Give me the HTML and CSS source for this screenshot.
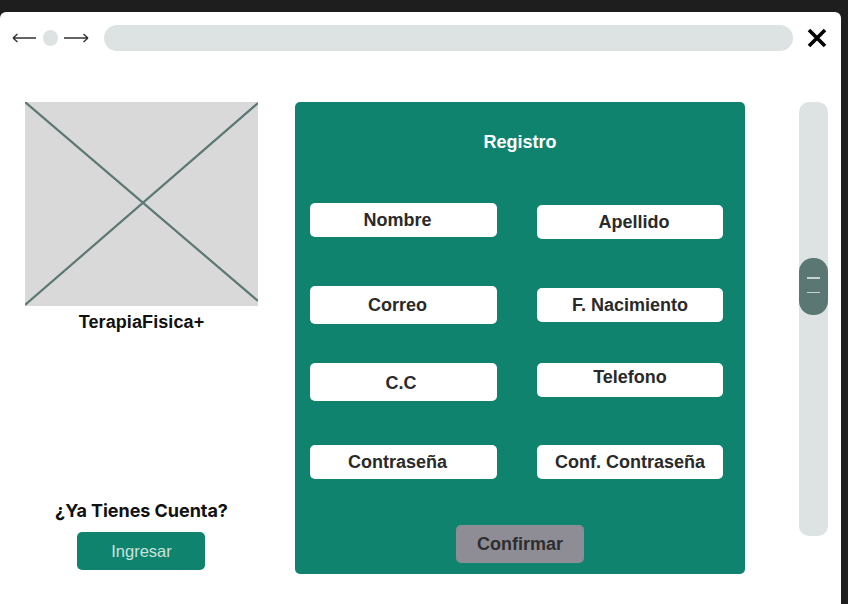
FILE: index.html
```html
<!DOCTYPE html>
<html lang="es">
<head>
<meta charset="utf-8">
<title>Registro - TerapiaFisica+</title>
<link rel="stylesheet" href="styles.css">
</head>
<body>
<div class="window">
  <div class="topbar">
    <svg class="arrow" width="24" height="12" viewBox="0 0 24 12"><path d="M1 6H24M1 6L5.5 2M1 6L5.5 10" fill="none" stroke="#333" stroke-width="1.4"/></svg>
    <span class="dot"></span>
    <svg class="arrow arrow-r" width="25" height="12" viewBox="0 0 25 12"><path d="M0 6H24M24 6L19.5 2M24 6L19.5 10" fill="none" stroke="#333" stroke-width="1.4"/></svg>
    <div class="address"></div>
    <svg class="close" width="20" height="20" viewBox="0 0 20 20"><path d="M2 2L18 18M18 2L2 18" stroke="#000" stroke-width="3.6" stroke-linecap="butt"/></svg>
  </div>
  <div class="main">
    <div class="side">
      <div class="placeholder">
        <svg width="233" height="204" viewBox="0 0 233 204" preserveAspectRatio="none"><path d="M0 0L233 199M233 1L0 203" stroke="#5b7874" stroke-width="2.2" fill="none"/></svg>
      </div>
      <div class="brand">TerapiaFisica+</div>
      <div class="login">
        <div class="question">¿Ya Tienes Cuenta?</div>
        <button class="btn-ingresar">Ingresar</button>
      </div>
    </div>
    <div class="panel">
      <div class="panel-title">Registro</div>
      <div class="fields">
        <div class="field h34 left">Nombre</div>
        <div class="field h34 off2 right">Apellido</div>
        <div class="field h38 left">Correo</div>
        <div class="field h34 off2">F. Nacimiento</div>
        <div class="field h38 low cc">C.C</div>
        <div class="field h34 high">Telefono</div>
        <div class="field h34 left">Contraseña</div>
        <div class="field h34">Conf. Contraseña</div>
      </div>
      <button class="btn-confirm">Confirmar</button>
    </div>
    <div class="scrollbar">
      <div class="thumb"><span></span><span></span></div>
    </div>
  </div>
</div>
</body>
</html>
```
FILE: styles.css
```css
html, body {
  margin: 0;
  padding: 0;
  background: #1e1e1e;
  width: 848px;
  height: 604px;
  overflow: hidden;
}
.window {
  margin-top: 12px;
  width: 841px;
  height: 592px;
  background: #ffffff;
  border-radius: 6px 6px 0 0;
  box-sizing: border-box;
  font-family: "Liberation Sans", Arial, sans-serif;
}
.topbar {
  display: flex;
  align-items: center;
  padding: 13px 14px 0 12px;
  height: 26px;
}
.arrow { display: block; }
.dot {
  width: 15px;
  height: 16px;
  border-radius: 50%;
  background: #dce3e2;
  margin: 0 6px 0 7px;
}
.address {
  flex: 1;
  height: 26px;
  border-radius: 13px;
  background: #dce3e2;
  margin: 0 14px 0 15px;
}
.close { display: block; }
.main {
  display: flex;
  padding: 51px 0 0 25px;
  height: 472px;
}
.side {
  width: 233px;
  display: flex;
  flex-direction: column;
  align-items: center;
  padding-bottom: 4px;
}
.placeholder {
  width: 233px;
  height: 204px;
  background: #d9d9d9;
}
.placeholder svg { display: block; }
.brand {
  margin-top: 5px;
  line-height: 22px;
  font-size: 18px;
  font-weight: 700;
  color: #111;
  letter-spacing: 0.1px;
}
.login {
  margin-top: auto;
  display: flex;
  flex-direction: column;
  align-items: center;
}
.question {
  font-family: Inter, "Liberation Sans", sans-serif;
  font-weight: 700;
  font-size: 18px;
  letter-spacing: -0.05px;
  line-height: 22px;
  color: #111;
}
.btn-ingresar {
  margin-top: 10px;
  width: 128px;
  height: 38px;
  border: none;
  border-radius: 5px;
  background: #10836f;
  color: #c9e2db;
  font-family: "Liberation Sans", Arial, sans-serif;
  font-size: 16.5px;
  padding: 0;
}
.panel {
  margin-left: 37px;
  width: 450px;
  height: 472px;
  box-sizing: border-box;
  background: #10836f;
  border-radius: 5px;
  padding: 29px 15px 0 15px;
  display: flex;
  flex-direction: column;
  align-items: center;
}
.panel-title {
  color: #ffffff;
  font-weight: 700;
  font-size: 18px;
  line-height: 22px;
}
.fields {
  margin-top: 50px;
  align-self: flex-start;
  width: 413px;
  display: grid;
  grid-template-columns: 187px 186px;
  column-gap: 40px;
  grid-template-rows: 83px 77px 82px 34px;
  align-items: start;
}
.field {
  background: #ffffff;
  border-radius: 5px;
  color: #2a2a2a;
  font-weight: 700;
  font-size: 18px;
  display: flex;
  align-items: center;
  justify-content: center;
  box-sizing: border-box;
}
.h34 { height: 34px; }
.h38 { height: 38px; }
.off2 { margin-top: 2px; }
.left { padding-right: 12px; }
.right { padding-left: 8px; }
.cc { padding-right: 5px; }
.high { padding-bottom: 6px; }
.low { padding-top: 3px; }
.btn-confirm {
  margin-top: 46px;
  width: 128px;
  height: 38px;
  border: none;
  border-radius: 5px;
  background: #8e8d96;
  color: #2e2e2e;
  font-family: "Liberation Sans", Arial, sans-serif;
  font-weight: 700;
  font-size: 18px;
  padding: 0;
}
.scrollbar {
  margin-left: 54px;
  width: 29px;
  height: 434px;
  background: #dce3e2;
  border-radius: 10px;
  display: flex;
  flex-direction: column;
  padding-top: 156px;
  box-sizing: border-box;
}
.thumb {
  width: 29px;
  height: 57px;
  border-radius: 14px;
  background: #5a7773;
  display: flex;
  flex-direction: column;
  align-items: center;
  justify-content: center;
  gap: 13px;
  padding-bottom: 3px;
  box-sizing: border-box;
}
.thumb span {
  width: 13px;
  height: 1.5px;
  background: #c6d3d1;
}
```
